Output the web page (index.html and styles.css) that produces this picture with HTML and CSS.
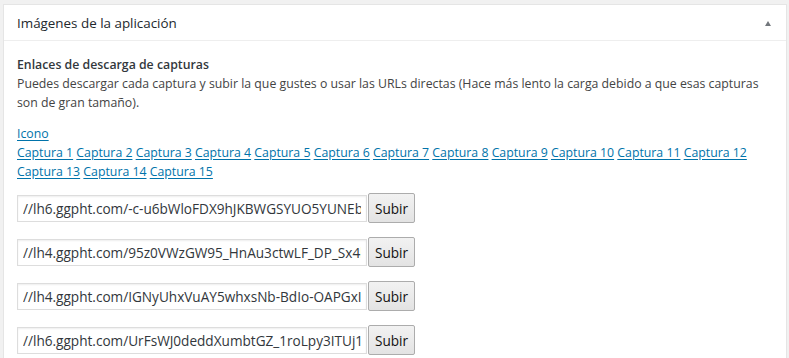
FILE: index.html
```html
<!DOCTYPE html>
<html lang="es">
<head>
<meta charset="utf-8">
<title>Imágenes de la aplicación</title>
<link rel="stylesheet" href="styles.css">
</head>
<body>
<div class="postbox">
  <div class="hndle">
    <h2 class="hndle-title">Imágenes de la aplicación</h2>
    <span class="toggle-arrow"></span>
  </div>
  <div class="inside">
    <div class="intro">
      <div class="label">Enlaces de descarga de capturas</div>
      <div class="desc">Puedes descargar cada captura y subir la que gustes o usar las URLs directas (Hace más lento la carga debido a que esas capturas son de gran tamaño).</div>
    </div>
    <div class="links">
      <div><a href="#">Icono</a></div>
      <div class="caps"><a href="#">Captura 1</a> <a href="#">Captura 2</a> <a href="#">Captura 3</a> <a href="#">Captura 4</a> <a href="#">Captura 5</a> <a href="#">Captura 6</a> <a href="#">Captura 7</a> <a href="#">Captura 8</a> <a href="#">Captura 9</a> <a href="#">Captura 10</a> <a href="#">Captura 11</a> <a href="#">Captura 12</a> <a href="#">Captura 13</a> <a href="#">Captura 14</a> <a href="#">Captura 15</a></div>
    </div>
    <div class="rows">
      <div class="row"><input class="url" type="text" value="//lh6.ggpht.com/-c-u6bWloFDX9hJKBWGSYUO5YUNEbq"><button class="btn">Subir</button></div>
      <div class="row"><input class="url" type="text" value="//lh4.ggpht.com/95z0VWzGW95_HnAu3ctwLF_DP_Sx4hq"><button class="btn">Subir</button></div>
      <div class="row"><input class="url" type="text" value="//lh4.ggpht.com/IGNyUhxVuAY5whxsNb-BdIo-OAPGxIIq"><button class="btn">Subir</button></div>
      <div class="row"><input class="url" type="text" value="//lh6.ggpht.com/UrFsWJ0deddXumbtGZ_1roLpy3ITUj1Iq"><button class="btn">Subir</button></div>
    </div>
  </div>
</div>
</body>
</html>
```
FILE: styles.css
```css
html, body {
  margin: 0;
  padding: 0;
  background: #f1f1f1;
}
body {
  box-sizing: border-box;
  padding: 4px 2px 0 3px;
  font-family: "Open Sans", "Noto Sans", sans-serif;
  color: #444;
  height: 358px;
  overflow: hidden;
}
.postbox {
  box-sizing: border-box;
  height: 100%;
  overflow: hidden;
  background: #fff;
  border: 1px solid #e5e5e5;
  border-bottom: 0;
}
.hndle {
  height: 35px;
  border-bottom: 1px solid #eee;
  display: flex;
  align-items: center;
  justify-content: space-between;
  padding: 0 15px 0 13px;
}
.hndle-title {
  margin: 0;
  font-size: 13.4px;
  font-weight: 500;
  color: #23282d;
}
.toggle-arrow {
  width: 0;
  height: 0;
  border-left: 3.5px solid transparent;
  border-right: 3.5px solid transparent;
  border-bottom: 5px solid #72777c;
  margin-top: 1px;
}
.inside {
  padding: 14px 12px 0 13px;
  font-size: 12.3px;
  line-height: 19px;
}
.label {
  font-weight: 600;
  color: #32373c;
}
.desc {
  color: #444;
}
.links {
  margin-top: 12px;
}
.links a {
  color: #0073aa;
  text-decoration: underline;
  text-underline-offset: 2px;
}
.rows {
  margin-top: 12px;
  display: flex;
  flex-direction: column;
  gap: 14px;
}
.row {
  display: flex;
  align-items: center;
  gap: 1px;
}
.url {
  width: 350px;
  height: 27px;
  box-sizing: border-box;
  border: 1px solid #ddd;
  box-shadow: inset 0 1px 2px rgba(0,0,0,.07);
  padding: 0 5px;
  font-family: "Open Sans", "Noto Sans", sans-serif;
  font-size: 13.6px;
  color: #32373c;
  background: #fff;
  outline: none;
  margin: 0;
}
.btn {
  height: 30px;
  width: 47px;
  box-sizing: border-box;
  border: 1px solid #acacac;
  border-radius: 2px;
  background: linear-gradient(#f2f2f2, #e3e3e3);
  font-family: "Open Sans", "Noto Sans", sans-serif;
  font-size: 13.6px;
  color: #111;
  padding: 0;
  margin: 0;
}
```
